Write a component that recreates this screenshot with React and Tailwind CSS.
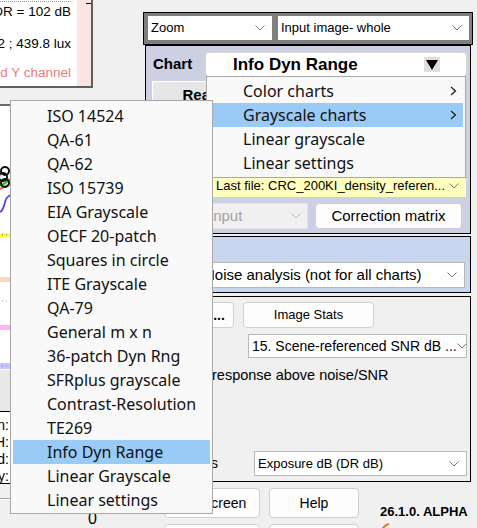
import React from "react";

function Chevron({ color = "#777" }) {
  return (
    <svg width="10" height="6" viewBox="0 0 10 6" className="shrink-0">
      <path d="M0.5 0.5 L5 5 L9.5 0.5" fill="none" stroke={color} strokeWidth="1" />
    </svg>
  );
}

function RightArrow() {
  return (
    <svg width="7" height="10" viewBox="0 0 7 10" className="shrink-0">
      <path d="M1 1 L5.5 5 L1 9" fill="none" stroke="#222" strokeWidth="1.3" />
    </svg>
  );
}

function MenuItem({ label, hl, sub }) {
  return (
    <div
      className={`h-[24px] mx-[2px] flex items-center justify-between pl-[34px] pr-[6px] ${
        hl ? "bg-[#99cbf6]" : ""
      }`}
    >
      <span className="whitespace-nowrap">{label}</span>
      {sub ? <RightArrow /> : null}
    </div>
  );
}

function CutLine({ children, className = "" }) {
  return (
    <div className={`h-[16px] flex justify-end overflow-hidden ${className}`}>
      <span className="whitespace-nowrap shrink-0">{children}</span>
    </div>
  );
}

function LeftColumn() {
  return (
    <div className="w-[143px] shrink-0 flex flex-col">
      <div className="shrink-0 w-[93px] h-[88px] flex bg-white border-r-2 border-b-2 border-[#5f5f5f]">
        <div className="flex-1 min-w-0 overflow-hidden flex flex-col pr-[6px] text-[13.5px] leading-[16px]">
          <div className="h-[2px] border-t border-dotted border-[#9a9a9a] mt-[1px]" />
          <CutLine className="mt-[1px]">Total DR = 102 dB</CutLine>
          <CutLine className="mt-[16px]">1.52 ; 439.8 lux</CutLine>
          <CutLine className="mt-[13px] text-[#f07a7a]">Selected Y channel</CutLine>
        </div>
        <div className="w-[14px] bg-[#fde4e4] flex justify-end">
          <div className="w-[5px] h-[1px] bg-black mt-[3px]" />
        </div>
      </div>

      <div className="shrink-0 mt-[16px] w-[138px] h-[266px] border-t-2 border-[#6a6a6a] bg-white overflow-hidden">
        <svg width="138" height="264" viewBox="0 0 138 264">
          <path d="M0 80 L5 77 L10 73" stroke="#22cc22" strokeWidth="2.5" fill="none" />
          <path d="M0 83 L4 81 L8 79" stroke="#ff5555" strokeWidth="2" fill="none" />
          <path d="M0 106 C3 105 4 100 5 96 C6 92 8 90 11 89" stroke="#4444ff" strokeWidth="1.8" fill="none" />
          <circle cx="5" cy="65" r="4" stroke="#111" strokeWidth="2" fill="none" />
          <circle cx="3" cy="71" r="4" stroke="#111" strokeWidth="2" fill="none" />
          <circle cx="5" cy="77" r="4" stroke="#111" strokeWidth="2" fill="none" />
          <rect x="0" y="127" width="10" height="4" fill="#ffff40" />
          <path d="M2 129 H3 M6 129 H7" stroke="#777" strokeWidth="1" />
          <rect x="0" y="171" width="10" height="5" fill="#ffd6bd" />
          <path d="M2 195 H3 M6 195 H7" stroke="#aaa" strokeWidth="1" />
          <rect x="0" y="219" width="10" height="5" fill="#ffb0ff" />
          <rect x="0" y="257" width="10" height="6" fill="#c4c4ff" />
          <path d="M2 260 H3 M6 260 H7" stroke="#8888cc" strokeWidth="1" />
        </svg>
      </div>

      <div className="shrink-0 h-[41px] bg-[#e8e8e8]" />

      <div className="shrink-0 h-[73px] w-[138px] border-y border-black bg-white pt-[5px] text-[14px] leading-[17px]">
        {["Mean:", "Max H:", "Std d:", "Density:"].map((t) => (
          <div key={t} className="w-[9px] overflow-hidden flex justify-end">
            <span className="whitespace-nowrap shrink-0">{t}</span>
          </div>
        ))}
      </div>

      <div className="shrink-0 mt-[14px] w-[138px] h-[2px] bg-[#a3a3a3] border-b border-white" />
      <div className="shrink-0 ml-[88px] mt-[11px] text-[16px] leading-[16px]">0</div>
    </div>
  );
}

function Btn({ children, className = "" }) {
  return (
    <div
      className={`shrink-0 flex items-center justify-center bg-[#fdfdfd] border border-[#d0d0d0] rounded-[4px] ${className}`}
    >
      {children}
    </div>
  );
}

function RightColumn() {
  return (
    <div className="w-[330px] shrink-0 flex flex-col pt-[12px]">
      {/* top bar */}
      <div className="shrink-0 h-[33px] border border-black bg-[#7f7f7f] pl-[4px] pr-[3px] pt-[3px] flex gap-[6px]">
        <div className="w-[124px] h-[24px] bg-white flex items-center justify-between pl-[3px] pr-[7px] text-[13px]">
          <span>Zoom</span>
          <Chevron />
        </div>
        <div className="w-[191px] h-[24px] bg-white flex items-center justify-between pl-[3px] pr-[7px] text-[13px]">
          <span>Input image- whole</span>
          <Chevron />
        </div>
      </div>

      {/* chart panel */}
      <div className="shrink-0 ml-[2px] w-[326px] border border-black bg-[#cdcfe2] pt-[6px] pb-[4px] flex flex-col">
        <div className="shrink-0 h-[25px] flex items-center">
          <div className="w-[59px] pl-[7px] text-[15px] font-bold">Chart</div>
          <div className="w-[262px] h-[25px] bg-white border border-[#d6d6d6] rounded-[4px] flex items-center pl-[27px] pr-[26px] justify-between">
            <span className="text-[17px] font-bold whitespace-nowrap">Info Dyn Range</span>
            <div className="w-[16px] h-[15px] bg-[#dedede] flex items-center justify-center">
              <svg width="12" height="10" viewBox="0 0 12 10">
                <path d="M0 0 H12 L6 10 Z" fill="#000" />
              </svg>
            </div>
          </div>
        </div>
        <div className="shrink-0 mt-[4px] ml-[6px] w-[170px] h-[28px] bg-[#e6e6e6] border-t border-l border-white flex items-center justify-center text-[15px] font-bold">
          Read image file
        </div>
        <div className="shrink-0 h-[66px]" />
        <div className="shrink-0 ml-[67px] w-[253px] h-[22px] bg-[#ffffc0] flex items-center justify-between pl-[3px] pr-[7px] text-[13px]">
          <span className="whitespace-nowrap">Last file: CRC_200KI_density_referen...</span>
          <Chevron />
        </div>
        <div className="shrink-0 mt-[6px] h-[26px] flex">
          <div className="ml-[58px] w-[104px] h-[26px] bg-[#f0f0f0] border border-[#e2e2e2] flex items-center justify-between pl-[4px] pr-[6px] text-[15px] text-[#a3a3a3]">
            <span>Input</span>
            <Chevron color="#b5b5b5" />
          </div>
          <Btn className="ml-[7px] w-[147px] h-[26px] text-[15px]">Correction matrix</Btn>
        </div>
      </div>

      {/* blue panel */}
      <div className="shrink-0 mt-[2px] ml-[2px] w-[326px] border border-black bg-[#c9d6f0] pb-[4px] flex flex-col">
        <div className="shrink-0 h-[25px]" />
        <div className="shrink-0 ml-[54px] w-[265px] h-[26px] bg-white border border-[#b9b9b9] flex items-center justify-between pl-[3px] pr-[7px] text-[15px]">
          <span className="whitespace-nowrap">Noise analysis (not for all charts)</span>
          <Chevron />
        </div>
      </div>

      {/* gray panel */}
      <div className="shrink-0 mt-[3px] ml-[2px] w-[326px] border border-black bg-[#f0f0f0] pt-[5px] pb-[5px] flex flex-col">
        <div className="shrink-0 h-[26px] flex">
          <Btn className="ml-[58px] w-[30px] h-[26px] text-[14px] font-bold">...</Btn>
          <Btn className="ml-[9px] w-[131px] h-[26px] text-[13px]">Image Stats</Btn>
        </div>
        <div className="shrink-0 mt-[6px] ml-[102px] w-[219px] h-[24px] bg-white border border-[#b9b9b9] flex items-center justify-between pl-[3px] pr-[7px] text-[14px]">
          <span className="whitespace-nowrap">15. Scene-referenced SNR dB ...</span>
          <Chevron />
        </div>
        <div className="shrink-0 mt-[8px] h-[20px] flex items-center text-[14.5px]">
          <div className="ml-[6px] w-[13px] h-[13px] bg-white border border-[#333]" />
          <span className="ml-[47px] whitespace-nowrap">response above noise/SNR</span>
        </div>
        <div className="shrink-0 mt-[65px] h-[25px] flex items-center">
          <div className="w-[73px] pr-[1px] flex justify-end overflow-hidden text-[14px]">
            <span className="whitespace-nowrap shrink-0">X-axis units</span>
          </div>
          <div className="ml-[35px] w-[213px] h-[25px] bg-white border border-[#b9b9b9] flex items-center justify-between pl-[3px] pr-[7px] text-[13px]">
            <span className="whitespace-nowrap">Exposure dB (DR dB)</span>
            <Chevron />
          </div>
        </div>
      </div>

      {/* bottom buttons */}
      <div className="shrink-0 mt-[6px] flex h-[30px]">
        <Btn className="ml-[21px] w-[96px] h-[30px] text-[14px]">Full screen</Btn>
        <Btn className="ml-[9px] w-[90px] h-[30px] text-[14px]">Help</Btn>
        <div className="ml-[21px] self-end mb-[-1px] flex flex-col">
          <span className="text-[13px] font-bold leading-[14px] whitespace-nowrap">26.1.0. ALPHA</span>
        </div>
      </div>
      <div className="shrink-0 mt-[6px] flex h-[30px]">
        <Btn className="ml-[21px] w-[96px] h-[30px] text-[14px]">Save</Btn>
        <Btn className="ml-[9px] w-[90px] h-[30px] text-[14px]">Exit</Btn>
        <div className="ml-[22px] -mt-[2px]">
          <svg width="10" height="8" viewBox="0 0 10 8">
            <path d="M1 7 L5 3 L8 2" stroke="#e8731c" strokeWidth="2" fill="none" />
          </svg>
        </div>
      </div>
    </div>
  );
}

export default function App() {
  const sub = [
    "ISO 14524",
    "QA-61",
    "QA-62",
    "ISO 15739",
    "EIA Grayscale",
    "OECF 20-patch",
    "Squares in circle",
    "ITE Grayscale",
    "QA-79",
    "General m x n",
    "36-patch Dyn Rng",
    "SFRplus grayscale",
    "Contrast-Resolution",
    "TE269",
    "Info Dyn Range",
    "Linear Grayscale",
    "Linear settings",
  ];
  return (
    <div className="relative w-[477px] h-[528px] overflow-hidden bg-[#f0f0f0] flex font-['Liberation_Sans',Arial,sans-serif] text-black">
      <LeftColumn />
      <RightColumn />

      {/* first-level dropdown */}
      <div className="absolute left-[206px] top-[76px] w-[260px] h-[102px] border border-[#a8a8a8] bg-[#f9f9f9] pt-[2px] font-['Noto_Sans',sans-serif] text-[16px] text-[#111]">
        <MenuItem label="Color charts" sub />
        <MenuItem label="Grayscale charts" sub hl />
        <MenuItem label="Linear grayscale" />
        <MenuItem label="Linear settings" />
      </div>

      {/* submenu */}
      <div className="absolute left-[10px] top-[100px] w-[203px] h-[414px] border border-[#a8a8a8] bg-[#f9f9f9] pt-[3px] font-['Noto_Sans',sans-serif] text-[16px] text-[#111]">
        {sub.map((s) => (
          <MenuItem key={s} label={s} hl={s === "Info Dyn Range"} />
        ))}
      </div>
    </div>
  );
}
